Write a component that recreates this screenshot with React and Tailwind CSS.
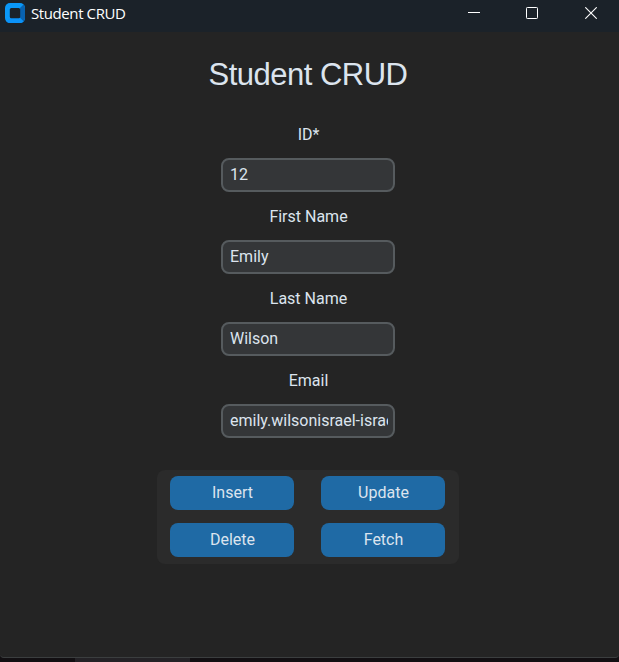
import React from "react";

const fields = [
  { label: "ID*", value: "12" },
  { label: "First Name", value: "Emily" },
  { label: "Last Name", value: "Wilson" },
  { label: "Email", value: "emily.wilsonisrael-israel" },
];

const actions = ["Insert", "Update", "Delete", "Fetch"];

function AppIcon() {
  return (
    <svg width="20" height="20" viewBox="0 0 20 20" className="shrink-0">
      <rect width="20" height="20" rx="5" fill="#0a98f8" />
      <path d="M15 5L18.500 1.500Q20 2.600 20 5V15Q20 17.400 18.500 18.500L15 15Z" fill="#0862b0" />
      <path d="M5 15H15L18.500 18.500Q17.400 20 15 20H5Q2.600 20 1.500 18.500Z" fill="#0b92f8" />
      <rect x="4.800" y="5" width="10.400" height="10.200" rx="1.500" fill="#1b2229" />
    </svg>
  );
}

function TitleBar() {
  return (
    <header className="flex h-8 shrink-0 items-start bg-[#1b2229] pl-[5px] text-white">
      <div className="flex pt-[3px]">
        <AppIcon />
        <h1 className="ml-[6px] font-['Open_Sans',sans-serif] text-[15px] leading-[21px] tracking-[-0.4px] whitespace-nowrap">
          Student CRUD
        </h1>
      </div>
      <div className="ml-auto flex h-[26px] items-center pr-[22px]">
        <svg width="12" height="12" viewBox="0 0 12 12" fill="none" stroke="currentColor" className="mr-[46px]">
          <path d="M0 5.500H12" />
        </svg>
        <svg width="12" height="12" viewBox="0 0 12 12" fill="none" stroke="currentColor" className="mr-[47px]">
          <rect x="0.500" y="0.500" width="11" height="11" rx="0.800" />
        </svg>
        <svg width="12" height="12" viewBox="0 0 12 12" fill="none" stroke="currentColor">
          <path d="M0.300 0.300L11.700 11.700M11.700 0.300L0.300 11.700" strokeWidth="1.100" />
        </svg>
      </div>
    </header>
  );
}

export default function App() {
  return (
    <div className="flex h-[662px] w-[619px] flex-col overflow-hidden bg-[#120f12] font-['Roboto',sans-serif] text-base text-[#dce4ee]">
      <TitleBar />
      <main className="flex h-[626px] shrink-0 flex-col items-center rounded-b-[4px] border-b border-[#3b3e3f] bg-[#242424] pr-[3px]">
        <h2 className="mt-[25px] font-['Liberation_Sans',Arial,sans-serif] text-[31px] leading-9 tracking-[-0.5px]">Student CRUD</h2>
        <div className="mt-[27px] flex flex-col gap-3">
          {fields.map(({ label, value }) => (
            <label key={label} className="flex flex-col items-center gap-3">
              <span className="h-[26px] pl-px leading-[29px]">{label}</span>
              <input
                defaultValue={value}
                className="-mb-0.5 h-[34px] w-[174px] rounded-lg border-2 border-[#565b5e] bg-[#343638] pr-[5px] pb-[2px] pl-[7px] outline-none"
              />
            </label>
          ))}
        </div>
        <div className="mt-[34px] grid h-[94px] w-[302px] grid-cols-[124px_124px] content-start justify-center gap-x-[27px] gap-y-[13px] rounded-lg bg-[#2b2b2b] pt-[6px] pr-px">
          {actions.map((action) => (
            <button key={action} className="h-[34px] rounded-lg bg-[#1f6aa5] pb-px pl-px">
              {action}
            </button>
          ))}
        </div>
      </main>
      <div className="ml-[75px] h-1 w-[115px] shrink-0 bg-[#242226]" />
    </div>
  );
}
